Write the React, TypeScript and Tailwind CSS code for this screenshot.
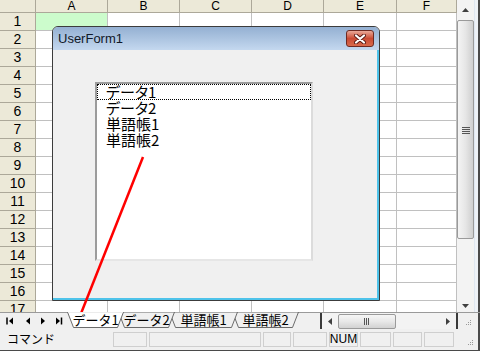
import React from "react";

const COLS = ["A", "B", "C", "D", "E", "F"];
const ROWS = Array.from({ length: 17 }, (_, i) => i + 1);
const ITEMS = ["データ1", "データ2", "単語帳1", "単語帳2"];

const jp = "font-['Noto_Sans_CJK_JP',sans-serif]";
const latin = "font-['Liberation_Sans','Noto_Sans_CJK_JP',sans-serif]";

function Sheet() {
  return (
    <div className="grid h-[312px] grid-cols-[36px_72px_72px_72px_72px_73px_60px] grid-rows-[13px_repeat(17,18px)] overflow-hidden bg-white">
      <div className="border-r border-b border-[#aca899] bg-[#ece9d8]" />
      {COLS.map((c) => (
        <div
          key={c}
          className={`border-r border-b border-[#aca899] bg-[#ece9d8] text-center text-[12px] leading-[12px] text-black ${latin}`}
        >
          {c}
        </div>
      ))}
      {ROWS.map((r) => (
        <React.Fragment key={r}>
          <div
            className={`border-r border-b border-[#aca899] bg-[#ece9d8] text-center text-[14px] leading-[17px] text-black ${latin}`}
          >
            {r}
          </div>
          {COLS.map((c) => (
            <div
              key={c}
              className={`border-r border-b border-[#c0c0c0] ${
                r === 1 && c === "A" ? "bg-[#ccfccc]" : "bg-white"
              }`}
            />
          ))}
        </React.Fragment>
      ))}
    </div>
  );
}

function VScroll() {
  return (
    <div className="flex h-[312px] w-[17px] flex-col bg-[#f3f3f3]">
      <div className="flex h-[20px] items-center justify-center">
        <svg width="7" height="4" viewBox="0 0 7 4">
          <path d="M0 4 L3.5 0 L7 4 Z" fill="#404040" />
        </svg>
      </div>
      <div className="flex h-[219px] items-center justify-center rounded-[2px] border border-[#9a9a9a] bg-linear-to-r from-[#f4f4f4] via-[#e6e6e6] to-[#cfcfcf]">
        <svg width="8" height="8" viewBox="0 0 8 8">
          <path d="M0 1.5h8M0 3.5h8M0 5.5h8M0 7.5h8" stroke="#555" strokeWidth="1" />
        </svg>
      </div>
      <div className="flex-1" />
      <div className="flex h-[12px] items-center justify-center">
        <svg width="7" height="4" viewBox="0 0 7 4">
          <path d="M0 0 L3.5 4 L7 0 Z" fill="#404040" />
        </svg>
      </div>
    </div>
  );
}

function Tab({
  label,
  width,
  active,
  z,
}: {
  label: string;
  width: number;
  active?: boolean;
  z: string;
}) {
  return (
    <div
      className={`relative -mr-[6px] flex h-[16px] shrink-0 items-center justify-center ${z}`}
      style={{ width }}
    >
      <svg
        className="absolute inset-0"
        width={width}
        height={16}
        viewBox={`0 0 ${width} 16`}
      >
        <path
          d={`M0.5 0 L${width - 0.5} 0 L${width - 6.5} 15.5 L6.5 15.5 Z`}
          fill={active ? "#ffffff" : "#f0f0f0"}
          stroke="#6b6b6b"
          strokeWidth="1"
        />
        {active && (
          <path d={`M1 0 L${width - 1} 0`} stroke="#ffffff" strokeWidth="1.5" />
        )}
      </svg>
      <span className={`relative text-[13px] leading-[16px] text-black ${jp}`}>
        {label}
      </span>
    </div>
  );
}

function NavButtons() {
  return (
    <div className="flex h-[16px] w-[67px] shrink-0 items-center pl-[6px]">
      <svg width="18" height="8" viewBox="0 0 18 8">
        <path d="M1 0.5v7" stroke="#000" strokeWidth="1.5" />
        <path d="M7 0.5 L3 4 L7 7.5 Z" fill="#000" />
      </svg>
      <svg width="16" height="8" viewBox="0 0 16 8">
        <path d="M6 0.5 L2 4 L6 7.5 Z" fill="#000" />
      </svg>
      <svg width="15" height="8" viewBox="0 0 15 8">
        <path d="M1 0.5 L5 4 L1 7.5 Z" fill="#000" />
      </svg>
      <svg width="10" height="8" viewBox="0 0 10 8">
        <path d="M1 0.5 L5 4 L1 7.5 Z" fill="#000" />
        <path d="M6.5 0.5v7" stroke="#000" strokeWidth="1.5" />
      </svg>
    </div>
  );
}

function HScroll() {
  return (
    <div className="flex h-[16px] w-[138px] shrink-0 items-center border-l-2 border-[#3a3a3a] bg-[#f3f3f3]">
      <div className="flex w-[16px] justify-center">
        <svg width="4" height="7" viewBox="0 0 4 7">
          <path d="M4 0 L0 3.5 L4 7 Z" fill="#404040" />
        </svg>
      </div>
      <div className="flex h-[15px] w-[58px] items-center justify-center rounded-[2px] border border-[#9a9a9a] bg-linear-to-b from-[#f6f6f6] via-[#e8e8e8] to-[#d2d2d2]">
        <svg width="8" height="7" viewBox="0 0 8 7">
          <path d="M1.5 0v7M3.5 0v7M5.5 0v7" stroke="#555" strokeWidth="1" />
        </svg>
      </div>
      <div className="flex-1" />
      <div className="flex w-[16px] justify-center">
        <svg width="4" height="7" viewBox="0 0 4 7">
          <path d="M0 0 L4 3.5 L0 7 Z" fill="#404040" />
        </svg>
      </div>
      <div className="h-[16px] w-[2px] bg-[#3a3a3a]" />
    </div>
  );
}

function Grip() {
  return (
    <svg width="6" height="6" viewBox="0 0 6 6">
      <rect x="4" y="0" width="1" height="1" fill="#999" />
      <rect x="2" y="2" width="1" height="1" fill="#999" />
      <rect x="4" y="2" width="1" height="1" fill="#999" />
      <rect x="0" y="4" width="1" height="1" fill="#999" />
      <rect x="2" y="4" width="1" height="1" fill="#999" />
      <rect x="4" y="4" width="1" height="1" fill="#999" />
    </svg>
  );
}

function StatusPanel({ w, label }: { w: string; label?: string }) {
  return (
    <div
      className={`flex h-[15px] shrink-0 items-center justify-center border border-[#cfcfcf] text-[12px] leading-[13px] text-black ${latin} ${w}`}
    >
      {label}
    </div>
  );
}

function UserForm() {
  return (
    <div className="absolute left-[52px] top-[26px] flex h-[275px] w-[328px] flex-col overflow-hidden rounded-t-[6px] border border-[#3c3c3c] bg-[#f0f0f0]">
      <div className="flex h-[23px] shrink-0 items-center justify-between bg-linear-to-b from-[#94b0d2] to-[#c4d8ef] pl-[5px] pr-[5px]">
        <span className={`text-[13px] text-[#101828] ${latin}`}>UserForm1</span>
        <div className="flex h-[17px] w-[28px] items-center justify-center rounded-[3px] border border-[#6e2a22] bg-linear-to-b from-[#e9a898] via-[#c94a34] to-[#d96a4c]">
          <svg width="12" height="10" viewBox="0 0 12 10">
            <path d="M2 1.5 L10 8.5 M10 1.5 L2 8.5" stroke="#5a1a14" strokeWidth="4" strokeLinecap="round" />
            <path d="M2 1.5 L10 8.5 M10 1.5 L2 8.5" stroke="#ffffff" strokeWidth="2.2" strokeLinecap="round" />
          </svg>
        </div>
      </div>
      <div className="flex-1 border-r-2 border-b-2 border-[#4ec3ea] pl-[42px] pt-[32px]">
        <div className="h-[179px] w-[218px] border-2 border-t-[#9c9c9c] border-l-[#9c9c9c] border-r-[#dcdcdc] border-b-[#e6e6e6] bg-white">
          {ITEMS.map((it, i) => (
            <div
              key={it}
              className={`h-[16px] pl-[9px] text-[15px] leading-[16px] text-black ${jp} [font-feature-settings:'palt'] ${
                i === 0 ? "outline outline-1 outline-dotted -outline-offset-1 outline-black" : ""
              }`}
            >
              {it}
            </div>
          ))}
        </div>
      </div>
    </div>
  );
}

export default function App() {
  return (
    <div className="relative h-[358px] w-[480px] overflow-hidden bg-white">
      <div className="flex">
        <Sheet />
        <VScroll />
        <div className="h-[312px] w-[6px] border-l border-r-2 border-l-[#dfe7f1] border-r-[#4a4a4a] bg-[#eef2f7]" />
      </div>

      <div className="flex h-[16px] border-t border-[#9a9a9a] bg-[#f0f0f0]">
        <NavButtons />
        <div className="-mt-[1px] flex w-[253px] shrink-0">
          <Tab label="データ1" width={57} active z="z-40" />
          <Tab label="データ2" width={57} z="z-30" />
          <Tab label="単語帳1" width={69} z="z-20" />
          <Tab label="単語帳2" width={67} z="z-10" />
        </div>
        <HScroll />
        <div className="flex w-[16px] items-end justify-end pb-[2px] pr-[2px]">
          <Grip />
        </div>
        <div className="w-[6px] border-r-2 border-[#4a4a4a]" />
      </div>

      <div className="flex h-[23px] items-center border-r-2 border-b border-[#4a4a4a] bg-[#f0f0f0] pl-[7px]">
        <span className={`w-[106px] shrink-0 text-[12px] text-black ${jp}`}>コマンド</span>
        <div className="flex gap-[2px]">
          <StatusPanel w="w-[34px]" />
          <StatusPanel w="w-[112px]" />
          <StatusPanel w="w-[28px]" />
          <StatusPanel w="w-[34px]" />
          <StatusPanel w="w-[29px]" label="NUM" />
          <StatusPanel w="w-[31px]" />
          <StatusPanel w="w-[29px]" />
          <StatusPanel w="w-[30px]" />
        </div>
        <div className="ml-auto pr-[4px] pt-[8px]">
          <Grip />
        </div>
      </div>

      <UserForm />

      <svg
        className="pointer-events-none absolute left-0 top-0"
        width="480"
        height="358"
        viewBox="0 0 480 358"
      >
        <line x1="143" y1="157" x2="80" y2="316" stroke="#ff0000" strokeWidth="2.5" />
      </svg>
    </div>
  );
}
